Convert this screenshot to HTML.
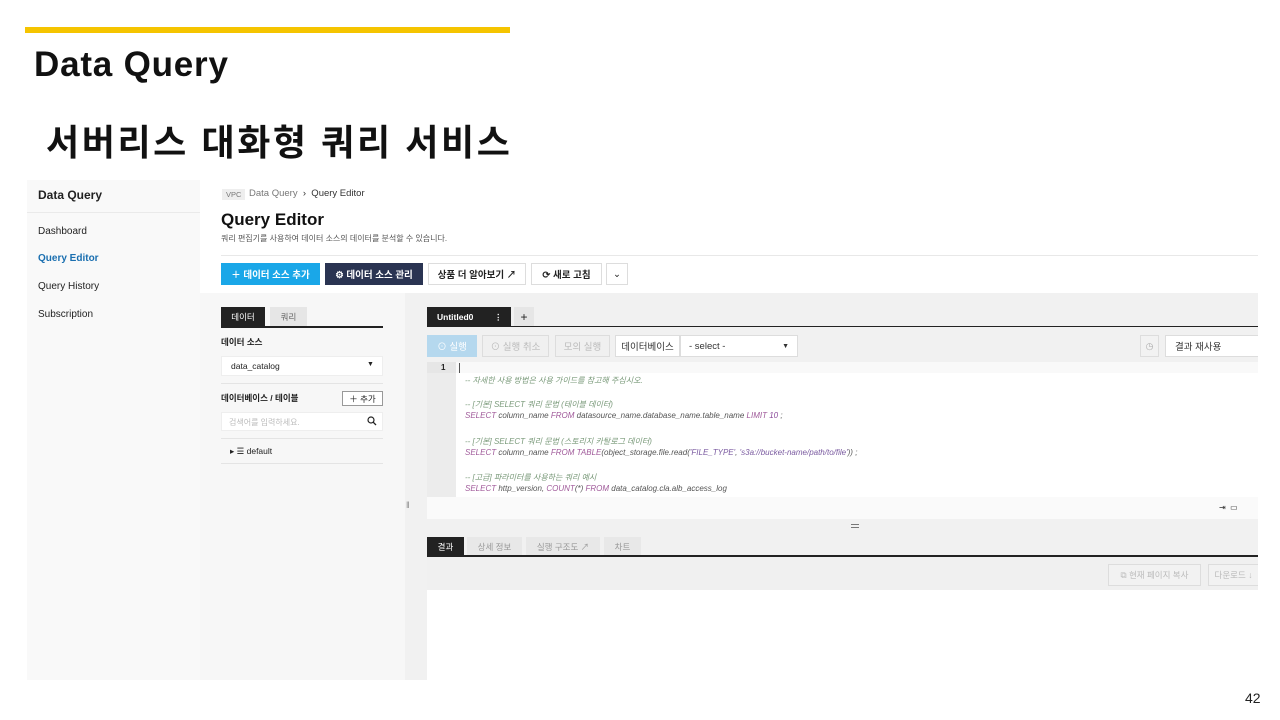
<!DOCTYPE html>
<html><head><meta charset="utf-8"><style>
*{margin:0;padding:0;box-sizing:border-box}
body{width:1280px;height:720px;background:#fff;position:relative;overflow:hidden;font-family:"Liberation Sans","Noto Sans CJK KR",sans-serif;color:#222}
.a{position:absolute}
.t{white-space:nowrap}
.btn{position:absolute;height:22px;font-size:9.5px;display:flex;align-items:center;justify-content:center;border:1px solid #ddd;background:#fff;white-space:nowrap}
.code{font-family:"Liberation Sans","Noto Sans CJK KR",sans-serif;font-style:italic;font-size:8px;white-space:nowrap;position:absolute;left:465px;color:#555}
.cm{color:#7a9a7a}.kw{color:#a05a9a}.nm{color:#8a4a9a}.st{color:#7a5aa0}
</style></head><body>
<div class="a" style="left:25px;top:27px;width:485px;height:6px;background:#f5c400"></div>
<div class="a t" style="left:34px;top:45px;font-size:35px;font-weight:bold;color:#111;letter-spacing:0.8px">Data Query</div>
<div class="a t" style="left:46px;top:114px;font-size:36px;font-weight:bold;color:#111;letter-spacing:2.6px">서버리스 대화형 쿼리 서비스</div>
<div class="a t" style="left:1245px;top:690px;font-size:14px;color:#222">42</div>

<!-- sidebar -->
<div class="a" style="left:27px;top:180px;width:173px;height:500px;background:#f9f9f9"></div>
<div class="a" style="left:27px;top:212px;width:173px;height:1px;background:#eaeaea"></div>
<div class="a t" style="left:38px;top:188px;font-size:12px;font-weight:bold">Data Query</div>
<div class="a t" style="left:38px;top:226px;font-size:10px">Dashboard</div>
<div class="a t" style="left:38px;top:253px;font-size:10px;color:#1a6fb0;font-weight:bold">Query Editor</div>
<div class="a t" style="left:38px;top:281px;font-size:10px">Query History</div>
<div class="a t" style="left:38px;top:309px;font-size:10px">Subscription</div>

<!-- header -->
<div class="a t" style="left:222px;top:189px;font-size:7.5px;background:#eee;color:#777;padding:1px 4px">VPC</div>
<div class="a t" style="left:249px;top:188px;font-size:9.5px;color:#777">Data Query <span style="color:#333">&nbsp;›&nbsp; Query Editor</span></div>
<div class="a t" style="left:221px;top:210px;font-size:17px;font-weight:bold;color:#111">Query Editor</div>
<div class="a t" style="left:221px;top:233px;font-size:8px;color:#555">쿼리 편집기를 사용하여 데이터 소스의 데이터를 분석할 수 있습니다.</div>
<div class="a" style="left:221px;top:255px;width:1037px;height:1px;background:#e8e8e8"></div>
<div class="btn" style="left:221px;top:263px;width:99px;background:#1aa7e8;border-color:#1aa7e8;color:#fff;font-weight:bold">＋ 데이터 소스 추가</div>
<div class="btn" style="left:325px;top:263px;width:98px;background:#2a3452;border-color:#2a3452;color:#fff;font-weight:bold">⚙ 데이터 소스 관리</div>
<div class="btn" style="left:428px;top:263px;width:98px;font-weight:bold">상품 더 알아보기 ↗</div>
<div class="btn" style="left:531px;top:263px;width:71px;font-weight:bold">⟳ 새로 고침</div>
<div class="btn" style="left:606px;top:263px;width:22px">⌄</div>

<!-- gray work area -->
<div class="a" style="left:200px;top:293px;width:1058px;height:387px;background:#f1f1f1"></div>
<div class="a" style="left:200px;top:293px;width:205px;height:387px;background:#f7f7f7"></div>
<div class="a t" style="left:406px;top:500px;font-size:9px;color:#888">‖</div>

<!-- left panel -->
<div class="a t" style="left:221px;top:307px;width:44px;height:20px;background:#222;color:#fff;font-size:8.5px;display:flex;align-items:center;justify-content:center">데이터</div>
<div class="a t" style="left:270px;top:307px;width:37px;height:20px;background:#e6e6e6;color:#666;font-size:8.5px;display:flex;align-items:center;justify-content:center">쿼리</div>
<div class="a" style="left:221px;top:326px;width:162px;height:2px;background:#222"></div>
<div class="a t" style="left:221px;top:336px;font-size:8.5px;font-weight:bold">데이터 소스</div>
<div class="a" style="left:221px;top:356px;width:162px;height:20px;background:#fff;border:1px solid #eee"></div>
<div class="a t" style="left:231px;top:361px;font-size:8.5px">data_catalog</div>
<div class="a t" style="left:367px;top:361px;font-size:7px">▼</div>
<div class="a" style="left:221px;top:383px;width:162px;height:1px;background:#e4e4e4"></div>
<div class="a t" style="left:221px;top:392px;font-size:8.5px;font-weight:bold">데이터베이스 / 테이블</div>
<div class="a t" style="left:342px;top:391px;width:41px;height:15px;border:1px solid #999;background:#fff;font-size:8.5px;display:flex;align-items:center;justify-content:center">＋ 추가</div>
<div class="a" style="left:221px;top:412px;width:162px;height:19px;background:#fff;border:1px solid #eee"></div>
<div class="a t" style="left:229px;top:417px;font-size:8px;color:#bbb">검색어를 입력하세요.</div>
<svg class="a" style="left:367px;top:416px" width="10" height="10" viewBox="0 0 10 10"><circle cx="4" cy="4" r="3" fill="none" stroke="#222" stroke-width="1.2"/><path d="M6.2 6.2L9 9" stroke="#222" stroke-width="1.3"/></svg>
<div class="a" style="left:221px;top:438px;width:162px;height:1px;background:#e4e4e4"></div>
<div class="a t" style="left:230px;top:446px;font-size:8.5px">▸ ☰ default</div>
<div class="a" style="left:221px;top:463px;width:162px;height:1px;background:#e4e4e4"></div>

<!-- editor -->
<div class="a t" style="left:427px;top:307px;width:84px;height:20px;background:#222;color:#fff;font-size:8.5px;font-weight:bold;padding-left:10px;display:flex;align-items:center">Untitled0<span style="position:absolute;left:67px">⋮</span></div>
<div class="a t" style="left:514px;top:307px;width:20px;height:19px;background:#e6e6e6;font-size:12px;display:flex;align-items:center;justify-content:center">+</div>
<div class="a" style="left:427px;top:326px;width:831px;height:1px;background:#222"></div>
<div class="btn" style="left:427px;top:335px;width:50px;background:#b5d8ee;border-color:#b5d8ee;color:#fff">⊙ 실행</div>
<div class="btn" style="left:482px;top:335px;width:67px;background:#f0f0f0;color:#bbb">⊙ 실행 취소</div>
<div class="btn" style="left:555px;top:335px;width:55px;background:#f0f0f0;color:#bbb">모의 실행</div>
<div class="btn" style="left:615px;top:335px;width:65px;color:#333">데이터베이스</div>
<div class="btn" style="left:680px;top:335px;width:118px;justify-content:space-between;padding:0 8px;color:#333"><span>- select -</span><span style="font-size:7px">▼</span></div>
<div class="btn" style="left:1140px;top:335px;width:19px;background:#f2f2f2;color:#aaa;font-size:9px">◷</div>
<div class="btn" style="left:1165px;top:335px;width:93px;justify-content:flex-start;padding-left:9px;color:#333;border-right:none">결과 재사용</div>

<div class="a" style="left:427px;top:362px;width:831px;height:135px;background:#fff"></div>
<div class="a" style="left:427px;top:362px;width:29px;height:135px;background:#ececec"></div>
<div class="a" style="left:427px;top:362px;width:831px;height:11px;background:rgba(0,0,0,0.025)"></div>
<div class="a t" style="left:441px;top:363px;font-size:8px;font-weight:bold">1</div>
<div class="a" style="left:459px;top:363px;width:1px;height:10px;background:#555"></div>
<div class="code cm" style="top:375px">-- 자세한 사용 방법은 사용 가이드를 참고해 주십시오.</div>
<div class="code cm" style="top:399px">-- [기본] SELECT 쿼리 문법 (테이블 데이터)</div>
<div class="code" style="top:411px"><span class="kw">SELECT</span> column_name <span class="kw">FROM</span> datasource_name.database_name.table_name <span class="kw">LIMIT</span> <span class="nm">10</span> ;</div>
<div class="code cm" style="top:436px">-- [기본] SELECT 쿼리 문법 (스토리지 카탈로그 데이터)</div>
<div class="code" style="top:448px"><span class="kw">SELECT</span> column_name <span class="kw">FROM</span> <span class="kw">TABLE</span>(object_storage.file.read(<span class="st">'FILE_TYPE'</span>, <span class="st">'s3a://bucket-name/path/to/file'</span>)) ;</div>
<div class="code cm" style="top:472px">-- [고급] 파라미터를 사용하는 쿼리 예시</div>
<div class="code" style="top:484px"><span class="kw">SELECT</span> http_version, <span class="kw">COUNT</span>(*) <span class="kw">FROM</span> data_catalog.cla.alb_access_log</div>
<div class="a" style="left:427px;top:497px;width:831px;height:22px;background:#fafafa"></div>
<div class="a t" style="left:1219px;top:503px;font-size:8px;color:#333">⇥ &nbsp;▭ &nbsp;</div>
<div class="a" style="left:851px;top:524px;width:8px;height:4px;border-top:1px solid #777;border-bottom:1px solid #777"></div>

<div class="a t" style="left:427px;top:537px;width:37px;height:19px;background:#222;color:#fff;font-size:8.5px;display:flex;align-items:center;justify-content:center">결과</div>
<div class="a t" style="left:467px;top:537px;width:55px;height:19px;background:#e8e8e8;color:#999;font-size:8.5px;display:flex;align-items:center;justify-content:center">상세 정보</div>
<div class="a t" style="left:526px;top:537px;width:74px;height:19px;background:#e8e8e8;color:#999;font-size:8.5px;display:flex;align-items:center;justify-content:center">실행 구조도 ↗</div>
<div class="a t" style="left:604px;top:537px;width:37px;height:19px;background:#e8e8e8;color:#999;font-size:8.5px;display:flex;align-items:center;justify-content:center">차트</div>
<div class="a" style="left:427px;top:555px;width:831px;height:2px;background:#222"></div>
<div class="a" style="left:427px;top:557px;width:831px;height:33px;background:#f0f0f0"></div>
<div class="btn" style="left:1108px;top:564px;width:93px;background:#f2f2f2;color:#bbb;font-size:8.5px">⧉ 현재 페이지 복사</div>
<div class="btn" style="left:1208px;top:564px;width:50px;background:#f2f2f2;color:#bbb;font-size:8.5px;border-right:none">다운로드 ↓</div>
<div class="a" style="left:427px;top:590px;width:831px;height:90px;background:#fff"></div>
</body></html>
